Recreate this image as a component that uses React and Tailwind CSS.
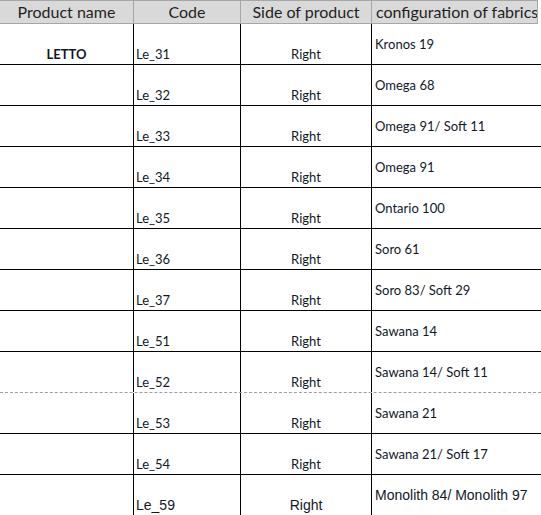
const rows = [
  ["Le_31", "Kronos 19"],
  ["Le_32", "Omega 68"],
  ["Le_33", "Omega 91/ Soft 11"],
  ["Le_34", "Omega 91"],
  ["Le_35", "Ontario 100"],
  ["Le_36", "Soro 61"],
  ["Le_37", "Soro 83/ Soft 29"],
  ["Le_51", "Sawana 14"],
  ["Le_52", "Sawana 14/ Soft 11"],
  ["Le_53", "Sawana 21"],
  ["Le_54", "Sawana 21/ Soft 17"],
];

export default function App() {
  return (
    <div className="w-[541px] h-[515px] overflow-hidden bg-white text-[#111827] font-['Lato',sans-serif]">
      <div className="flex h-[24px] w-[538px] border-y border-r border-[#a6a6a6] bg-[#d9d9d9] text-[16px] text-[#1f1f1f] leading-none">
        <div className="w-[134px] shrink-0 border-r border-[#a6a6a6] flex items-center justify-center">Product name</div>
        <div className="w-[107px] shrink-0 border-r border-[#a6a6a6] flex items-center justify-center">Code</div>
        <div className="w-[131px] shrink-0 border-r border-[#a6a6a6] flex items-center justify-center">Side of product</div>
        <div className="flex-1 flex items-center pl-[4px] whitespace-nowrap overflow-hidden">configuration of fabrics</div>
      </div>
      {rows.map(([code, fab], i) => (
        <div
          key={code}
          className={
            "flex h-[41px] border-b text-[13px] leading-none " +
            (i === 8 ? "border-dashed border-[#9e9e9e]" : "border-black")
          }
        >
          <div className="w-[134px] shrink-0 border-r border-black flex items-end justify-center pb-[3px] font-bold">
            {i === 0 ? "LETTO" : ""}
          </div>
          <div className="w-[107px] shrink-0 border-r border-black flex items-end pl-[2px] pb-[3px]">{code}</div>
          <div className="w-[131px] shrink-0 border-r border-black flex items-end justify-center pb-[3px]">Right</div>
          <div className="flex-1 flex items-center pl-[3px] whitespace-nowrap">{fab}</div>
        </div>
      ))}
      <div className="flex h-[41px] border-b border-black text-[14px] leading-none font-['Liberation_Sans',sans-serif]">
        <div className="w-[134px] shrink-0 border-r border-black" />
        <div className="w-[107px] shrink-0 border-r border-black flex items-end pl-[2px] pb-[3px]">Le_59</div>
        <div className="w-[131px] shrink-0 border-r border-black flex items-end justify-center pb-[3px]">Right</div>
        <div className="flex-1 flex items-center pl-[3px] whitespace-nowrap">Monolith 84/ Monolith 97</div>
      </div>
    </div>
  );
}
